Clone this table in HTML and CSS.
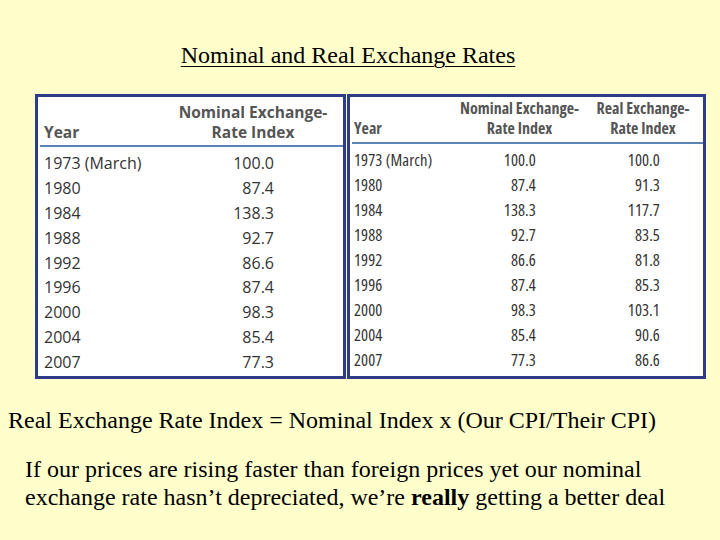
FILE: index.html
```html
<!DOCTYPE html>
<html>
<head>
<meta charset="utf-8">
<link rel="stylesheet" href="styles.css">
</head>
<body>
<div class="slide">
  <h1 class="title">Nominal and Real Exchange Rates</h1>
  <div class="tables">
    <div class="tbl tbl-left">
      <div class="head">
        <div class="h-year">Year</div>
        <div class="h-col">Nominal Exchange-<br>Rate Index</div>
      </div>
      <div class="rule"></div>
      <div class="row"><span class="y">1973 (March)</span><span class="v">100.0</span></div>
      <div class="row"><span class="y">1980</span><span class="v">87.4</span></div>
      <div class="row"><span class="y">1984</span><span class="v">138.3</span></div>
      <div class="row"><span class="y">1988</span><span class="v">92.7</span></div>
      <div class="row"><span class="y">1992</span><span class="v">86.6</span></div>
      <div class="row"><span class="y">1996</span><span class="v">87.4</span></div>
      <div class="row"><span class="y">2000</span><span class="v">98.3</span></div>
      <div class="row"><span class="y">2004</span><span class="v">85.4</span></div>
      <div class="row"><span class="y">2007</span><span class="v">77.3</span></div>
    </div>
    <div class="tbl tbl-right">
      <div class="head">
        <div class="h-year">Year</div>
        <div class="h-col">Nominal Exchange-<br>Rate Index</div>
        <div class="h-col h-real">Real Exchange-<br>Rate Index</div>
      </div>
      <div class="rule"></div>
      <div class="row"><span class="y">1973 (March)</span><span class="v">100.0</span><span class="v">100.0</span></div>
      <div class="row"><span class="y">1980</span><span class="v">87.4</span><span class="v">91.3</span></div>
      <div class="row"><span class="y">1984</span><span class="v">138.3</span><span class="v">117.7</span></div>
      <div class="row"><span class="y">1988</span><span class="v">92.7</span><span class="v">83.5</span></div>
      <div class="row"><span class="y">1992</span><span class="v">86.6</span><span class="v">81.8</span></div>
      <div class="row"><span class="y">1996</span><span class="v">87.4</span><span class="v">85.3</span></div>
      <div class="row"><span class="y">2000</span><span class="v">98.3</span><span class="v">103.1</span></div>
      <div class="row"><span class="y">2004</span><span class="v">85.4</span><span class="v">90.6</span></div>
      <div class="row"><span class="y">2007</span><span class="v">77.3</span><span class="v">86.6</span></div>
    </div>
  </div>
  <p class="formula">Real Exchange Rate Index = Nominal Index x (Our CPI/Their CPI)</p>
  <p class="note">If our prices are rising faster than foreign prices yet our nominal exchange rate hasn’t depreciated, we’re <b>really</b> getting a better deal</p>
</div>
</body>
</html>
```
FILE: styles.css
```css
html, body {
  margin: 0;
  padding: 0;
  background: #ffffcc;
}
.slide {
  width: 720px;
  height: 540px;
  background: #ffffcc;
  font-family: "Liberation Serif", "Times New Roman", serif;
  color: #000;
  padding-top: 41px;
  box-sizing: border-box;
}
.title {
  margin: 0;
  padding-right: 24px;
  text-align: center;
  font-weight: normal;
  font-size: 24px;
  line-height: 28px;
  text-decoration: underline;
  text-underline-offset: 3px;
  text-decoration-thickness: 1px;
}
.tables {
  display: flex;
  margin: 25px 0 0 35px;
}
.tbl {
  background: #fff;
  border: 3px solid #2e3b87;
  height: 285px;
  box-sizing: border-box;
  color: #333;
}
.tbl-left {
  width: 311px;
  font-family: "Open Sans", sans-serif;
  font-size: 16px;
}
.tbl-right {
  width: 359px;
  font-family: "Open Sans", sans-serif;
  font-stretch: 75%;
  font-size: 16.5px;
  letter-spacing: 0.1px;
  margin-left: 1px;
}
.head {
  display: grid;
  align-items: end;
  font-weight: bold;
  color: #555;
  line-height: 20px;
  white-space: nowrap;
}
.tbl-left .head {
  grid-template-columns: 140px 150px;
  padding-top: 5px;
  padding-bottom: 3px;
  font-size: 15.5px;
}
.tbl-right .head {
  grid-template-columns: 105px 129px 6px 106px;
  padding-top: 1px;
  padding-bottom: 4px;
  font-size: 16px;
  letter-spacing: 0;
}
.tbl-right .h-real {
  grid-column: 4;
}
.h-year {
  padding-left: 6px;
}
.tbl-right .h-year {
  padding-left: 4px;
}
.h-col {
  text-align: center;
  justify-self: center;
}
.rule {
  height: 2px;
  background: #5d83b5;
  margin-left: 2px;
  margin-bottom: 3.5px;
}
.tbl-right .rule {
  margin-bottom: 2.5px;
}
.row {
  display: grid;
  align-items: center;
}
.tbl-left .row {
  height: 24.9px;
  grid-template-columns: 140px 96px;
}
.tbl-right .row {
  height: 25.1px;
  grid-template-columns: 105px 81px 124px;
}
.y {
  padding-left: 6px;
}
.tbl-right .y {
  padding-left: 4px;
}
.v {
  text-align: right;
}
.formula {
  margin: 27px 0 0 8px;
  font-size: 24px;
  line-height: 28px;
}
.note {
  margin: 21px 0 0 25px;
  width: 650px;
  font-size: 24px;
  line-height: 28px;
}
```
